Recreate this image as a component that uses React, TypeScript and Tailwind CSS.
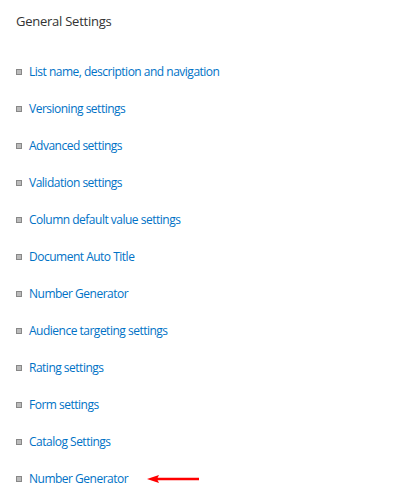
import React from 'react';

const items = [
  'List name, description and navigation',
  'Versioning settings',
  'Advanced settings',
  'Validation settings',
  'Column default value settings',
  'Document Auto Title',
  'Number Generator',
  'Audience targeting settings',
  'Rating settings',
  'Form settings',
  'Catalog Settings',
  'Number Generator',
];

export default function App() {
  return (
    <div className="w-[403px] h-[502px] bg-white overflow-hidden pl-4 pt-[13px] font-['Open_Sans',sans-serif]">
      {/* Section header */}
      <h2 className="text-[13px] leading-[17px] text-[#333] tracking-[-0.25px]">General Settings</h2>

      <ul className="mt-[33px] flex flex-col gap-[20px]">
        {items.map((label, i) => (
          <li key={i} className="flex items-center h-[17px]">
            <span className="w-[6px] h-[6px] bg-[#bbb] border border-[#888] mr-[7px]" />
            <a className="text-[12px] leading-[17px] text-[#0072c6] tracking-[-0.5px]">{label}</a>
            {i === items.length - 1 && (
              <svg width="52" height="8" viewBox="0 0 52 8" className="ml-[19px]">
                <line x1="8" y1="4" x2="52" y2="4" stroke="#f00" strokeWidth="2.5" />
                <polygon points="0,4 12,0 10,4 12,8" fill="#f00" />
              </svg>
            )}
          </li>
        ))}
      </ul>
    </div>
  );
}
